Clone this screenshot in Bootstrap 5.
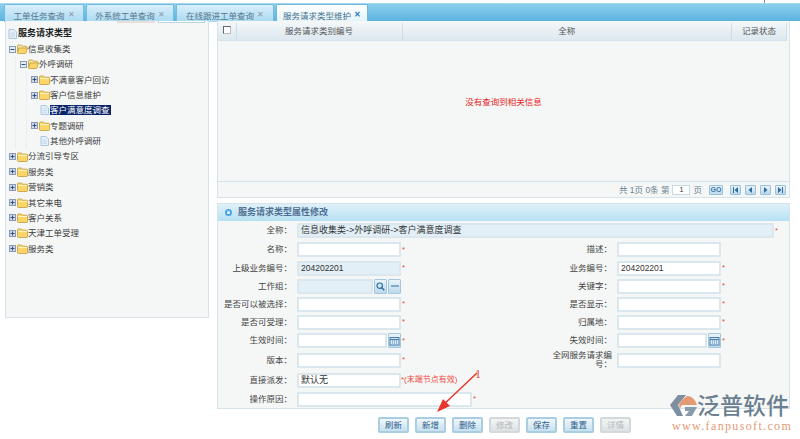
<!DOCTYPE html>
<html lang="zh-CN">
<head>
    <meta charset="UTF-8">
    <meta name="viewport" content="width=device-width, initial-scale=1.0">
    <link href="https://cdn.jsdelivr.net/npm/bootstrap@5.3.0/dist/css/bootstrap.min.css" rel="stylesheet">
    <title>服务请求类型维护</title>
    <style>
        html, body {
            height: 439px;
            overflow: hidden;
        }

        body {
            position: relative;
            background: #fff;
            color: #444;
            font-family: "Liberation Sans", "Noto Sans CJK SC", sans-serif;
            font-size: 8.5px;
            line-height: 1.2;
        }

        /* tab strip */
        .tab-strip {
            height: 18px;
            margin-top: 3px;
            padding-left: 4px;
            gap: 2px;
            border: 0;
            border-top: 1px solid #a5d8ee;
            background: linear-gradient(#8ad0ec, #5cb3e0);
        }

        .tab-strip .nav-link {
            height: 18px;
            margin: 0;
            padding: 3px 0 0 0;
            text-align: center;
            color: #57778c;
            font-size: 8.5px;
            line-height: 13px;
            border: 1px solid #74bbdf;
            border-bottom: 0;
            border-radius: 2px 2px 0 0;
            background: linear-gradient(#d9eefa, #a9daf2);
        }

        .tab-strip .nav-link.active {
            color: #45708c;
            border-color: #6db6dc;
            background: linear-gradient(#fff, #e4f3fa);
        }

        .tab-close {
            margin-left: 3px;
            color: #8a9aa6;
            font-size: 8px;
            vertical-align: 2px;
        }

        .active .tab-close {
            color: #2a7cc0;
            font-weight: 700;
        }

        /* main layout */
        .tree-panel {
            width: 204px;
            height: 297px;
            margin: 0 8px 0 5px;
            background: #f4f7f6;
            border: 1px solid #d5e3ec;
            border-top: 0;
            flex: none;
        }

        .right-col {
            width: 573px;
            flex: none;
        }

        .tree-stubs {
            height: 5px;
            padding-left: 111px;
            gap: 3px;
        }

        .tree-stub {
            width: 38px;
            height: 2px;
            background: #eadfd8;
        }

        .tree-stub + .tree-stub {
            width: 47px;
            background: #fff;
            border: 1px solid #bcd3e2;
            border-top: 0;
        }

        .tree-list, .tree-list ul {
            margin: 0;
            padding: 0;
            list-style: none;
        }

        .tree-list ul {
            margin-left: 6px;
            padding-left: 4px;
            border-left: 1px dotted #e2e6e6;
        }

        .tree-list {
            padding-left: 3px;
        }

        .tree-row {
            display: flex;
            align-items: center;
            height: 15.36px;
            white-space: nowrap;
            color: #3c3c3c;
            font-size: 8.5px;
        }

        .tree-root {
            margin-left: -2px;
            font-weight: 700;
            font-size: 9px;
            color: #222;
        }

        .tree-row svg {
            flex: none;
        }

        .tree-row .tree-sign {
            width: 7px;
            height: 7px;
            margin-right: 1px;
        }

        .tree-row .tree-icon {
            width: 11px;
            height: 10px;
        }

        .tree-leaf-pad {
            width: 8px;
            flex: none;
        }

        .tree-picked {
            background: #0a246a;
            color: #fff;
            padding: 0 1px 0 0;
            line-height: 10px;
        }

        /* result grid */
        .grid-box {
            height: 177px;
            background: #f4f7f6;
            border: 1px solid #d5e3ec;
            border-top: 0;
            padding-top: 2px;
        }

        .grid-head {
            height: 17px;
            margin: 0 2px 0 0;
            table-layout: fixed;
            width: calc(100% - 2px);
        }

        .grid-head th {
            padding: 0;
            height: 17px;
            font-weight: 400;
            font-size: 8.5px;
            text-align: center;
            vertical-align: middle;
            color: #555;
            background: linear-gradient(#f1f6f9, #dce8ef);
            border: 0;
            border-right: 1px solid #cfdde6;
            border-bottom: 1px solid #d5e3ec;
        }

        .check-box {
            display: inline-block;
            width: 8px;
            height: 8px;
            background: #fff;
            border: 1px solid #666;
            border-right-color: #bbb;
            border-bottom-color: #bbb;
        }

        .grid-empty {
            height: 140px;
            padding-bottom: 16px;
            color: #e81c1c;
            font-size: 8.5px;
        }

        .pager {
            height: 18px;
            padding-right: 3px;
            gap: 3px;
            color: #6f8394;
            border-top: 1px solid #d5e3ec;
            font-size: 8.5px;
        }

        .pager-input {
            width: 18px;
            height: 10px;
            background: #fff;
            border: 1px solid #c6d9e5;
            text-align: center;
            line-height: 8px;
            color: #444;
            font-size: 8px;
        }

        .pager-btn {
            display: inline-flex;
            align-items: center;
            justify-content: center;
            width: 11px;
            height: 10px;
            margin-left: 1px;
            background: linear-gradient(#e8f3fa, #bcd9ec);
            border: 1px solid #9cc2da;
            border-radius: 1px;
        }

        .pager-go {
            width: 14px;
            margin: 0 3px 0 4px;
            color: #3b78a8;
            font-size: 7px;
            font-weight: 700;
        }

        /* edit form */
        .form-box {
            height: 206px;
            margin-top: 5px;
            background: #f4f7f6;
            border: 1px solid #d5e3ec;
        }

        .form-title {
            height: 17px;
            padding-left: 7px;
            gap: 6px;
            color: #4f6f92;
            font-weight: 700;
            font-size: 9px;
            background: linear-gradient(#dff1f9, #b6e0f2);
        }

        .title-dot {
            width: 7px;
            height: 7px;
            border: 2px solid #49a5e3;
            border-radius: 50%;
            background: #fff;
        }

        .form-grid {
            display: grid;
            grid-template-columns: 79px 104px 4px 212px 104px 1fr;
            grid-template-rows: 19px 19px 18px 18px 18px 18px 19px 20px 20px 18px;
            align-items: center;
        }

        .field-label {
            padding-right: 5px;
            text-align: right;
            color: #444;
            line-height: 9px;
            white-space: nowrap;
        }

        .field-label-wrap {
            padding-left: 147px;
            white-space: normal;
        }

        .field-input {
            display: block;
            width: 104px;
            height: 15px;
            padding: 0 2px;
            color: #333;
            font-size: 8.5px;
            line-height: 11px;
            background: #fff;
            border: 2px solid #dbe7ee;
            border-radius: 1px;
        }

        .field-input.is-locked {
            background: #e2eff6;
        }

        .field-big-text {
            font-size: 9px;
        }

        .field-span {
            display: flex;
            align-items: center;
            grid-column: span 5;
        }

        .field-span .field-input {
            flex: none;
        }

        .field-span .field-wide {
            width: 477px;
        }

        .field-span .field-long {
            width: 175px;
        }

        .field-star {
            color: #f0483e;
            font-size: 8px;
            padding-left: 1px;
            white-space: nowrap;
        }

        .field-join {
            display: flex;
            width: 104px;
            gap: 1px;
        }

        .field-join .field-input {
            width: auto;
            flex: 1;
            min-width: 0;
        }

        .side-btn {
            display: flex;
            align-items: center;
            justify-content: center;
            width: 13px;
            height: 15px;
            background: linear-gradient(#e8f3fa, #bcd9ec);
            border: 1px solid #a4c7dd;
            border-radius: 1px;
        }

        .action-bar {
            height: 29px;
            padding: 8px 0 0 161px;
            gap: 6px;
        }

        .action-bar .btn {
            width: 31px;
            height: 16px;
            padding: 0;
            color: #2e5f8a;
            font-size: 8.5px;
            line-height: 12px;
            background: linear-gradient(#f0f7fb, #c7e0ef);
            border: 2px solid #a9cde1;
            border-radius: 2px;
        }

        .action-bar .btn:disabled {
            opacity: 1;
            color: #b5b9bc;
            background: linear-gradient(#f3f5f5, #dde2e4);
            border-color: #d3d8da;
        }

        /* things lying over the page */
        .note-arrow {
            position: absolute;
            left: 430px;
            top: 372px;
            width: 60px;
            height: 48px;
        }

        .note-num {
            position: absolute;
            left: 475px;
            top: 367px;
            color: #e8453c;
            font-family: "Liberation Serif", serif;
            font-size: 12px;
        }

        .brand-mark {
            position: absolute;
            left: 668px;
            top: 394px;
            width: 130px;
        }

        .brand-name {
            position: absolute;
            left: 29px;
            top: -2px;
            color: #6c7f90;
            font-size: 23px;
            font-weight: 500;
            line-height: 28px;
            white-space: nowrap;
        }

        .brand-url {
            position: absolute;
            left: 4px;
            top: 26px;
            color: #e39a73;
            font-family: "Liberation Serif", serif;
            font-size: 12px;
            letter-spacing: 1.35px;
            line-height: 12px;
            white-space: nowrap;
        }

        .top-tick {
            position: absolute;
            left: 764px;
            top: 0;
            width: 1px;
            height: 3px;
            background: #888;
        }
    </style>
</head>

<body>
    <svg width="0" height="0" class="position-absolute">
        <symbol id="folder" viewBox="0 0 11 10">
            <path d="M.5 8.500V2q0-1 1-1h3l1 1.200h4q1 0 1 1v5.300q0 1-1 1h-8q-1 0-1-1z" fill="#fbd568" stroke="#c09a3a" stroke-width=".8"/>
            <path d="M1.200 3.500h8.600" stroke="#fff3c4" stroke-width="1"/>
        </symbol>
        <symbol id="folder-open" viewBox="0 0 11 10">
            <path d="M.5 8.500V2q0-1 1-1h3l1 1.200h3.500q1 0 1 1V4" fill="#f6e3a6" stroke="#c09a3a" stroke-width=".8"/>
            <path d="M.5 8.800 2 4h8.500l-1.500 4.800q-.2.700-1 .700H1.300q-1 0-.8-.7z" fill="#fbd568" stroke="#c09a3a" stroke-width=".8"/>
        </symbol>
        <symbol id="file" viewBox="0 0 11 10">
            <path d="M2 .5h5l2.500 2.500v6.500H2z" fill="#e4f0fb" stroke="#9dbbd6" stroke-width=".8"/>
            <path d="M3.500 4h4.500M3.500 5.700h4.500M3.500 7.400h4.500" stroke="#b4cde3" stroke-width=".6"/>
        </symbol>
        <symbol id="plus" viewBox="0 0 7 7">
            <rect x=".5" y=".5" width="6" height="6" fill="#ced9e8" stroke="#8b9bb5"/>
            <path d="M1.500 3.500h4M3.500 1.500v4" stroke="#334f80"/>
        </symbol>
        <symbol id="minus" viewBox="0 0 7 7">
            <rect x=".5" y=".5" width="6" height="6" fill="#e6ecf3" stroke="#8b9bb5"/>
            <path d="M1.500 3.500h4" stroke="#334f80"/>
        </symbol>
        <symbol id="cal" viewBox="0 0 11 10">
            <rect x="1" y="1.500" width="9" height="7.500" fill="#dcecf7" stroke="#4d7fae"/>
            <path d="M1 3.500h9" stroke="#4d7fae" stroke-width="1.200"/>
            <path d="M3 5h1M5 5h1M7 5h1M3 7h1M5 7h1M7 7h1" stroke="#4d7fae"/>
        </symbol>
    </svg>

    <div class="top-tick"></div>

    <ul class="nav nav-tabs tab-strip">
        <li class="nav-item"><a class="nav-link" href="#" style="width: 80px">工单任务查询<span class="tab-close">✕</span></a></li>
        <li class="nav-item"><a class="nav-link" href="#" style="width: 88px">外系统工单查询<span class="tab-close">✕</span></a></li>
        <li class="nav-item"><a class="nav-link" href="#" style="width: 98px">在线跟进工单查询<span class="tab-close">✕</span></a></li>
        <li class="nav-item"><a class="nav-link active" href="#" style="width: 92px">服务请求类型维护<span class="tab-close">✕</span></a></li>
    </ul>

    <div class="d-flex">
        <div class="tree-panel">
            <div class="tree-stubs d-flex"><span class="tree-stub"></span><span class="tree-stub"></span></div>
            <ul class="tree-list">
                <li class="tree-row tree-root"><svg class="tree-icon"><use href="#file"/></svg>服务请求类型</li>
                <li>
                    <div class="tree-row"><svg class="tree-sign"><use href="#minus"/></svg><svg class="tree-icon"><use href="#folder-open"/></svg>信息收集类</div>
                    <ul>
                        <li>
                            <div class="tree-row"><svg class="tree-sign"><use href="#minus"/></svg><svg class="tree-icon"><use href="#folder-open"/></svg>外呼调研</div>
                            <ul>
                                <li class="tree-row"><svg class="tree-sign"><use href="#plus"/></svg><svg class="tree-icon"><use href="#folder"/></svg>不满意客户回访</li>
                                <li class="tree-row"><svg class="tree-sign"><use href="#plus"/></svg><svg class="tree-icon"><use href="#folder"/></svg>客户信息维护</li>
                                <li class="tree-row"><span class="tree-leaf-pad"></span><svg class="tree-icon"><use href="#file"/></svg><span class="tree-picked">客户满意度调查</span></li>
                                <li class="tree-row"><svg class="tree-sign"><use href="#plus"/></svg><svg class="tree-icon"><use href="#folder"/></svg>专题调研</li>
                                <li class="tree-row"><span class="tree-leaf-pad"></span><svg class="tree-icon"><use href="#file"/></svg>其他外呼调研</li>
                            </ul>
                        </li>
                    </ul>
                </li>
                <li class="tree-row"><svg class="tree-sign"><use href="#plus"/></svg><svg class="tree-icon"><use href="#folder"/></svg>分流引导专区</li>
                <li class="tree-row"><svg class="tree-sign"><use href="#plus"/></svg><svg class="tree-icon"><use href="#folder"/></svg>服务类</li>
                <li class="tree-row"><svg class="tree-sign"><use href="#plus"/></svg><svg class="tree-icon"><use href="#folder"/></svg>营销类</li>
                <li class="tree-row"><svg class="tree-sign"><use href="#plus"/></svg><svg class="tree-icon"><use href="#folder"/></svg>其它来电</li>
                <li class="tree-row"><svg class="tree-sign"><use href="#plus"/></svg><svg class="tree-icon"><use href="#folder"/></svg>客户关系</li>
                <li class="tree-row"><svg class="tree-sign"><use href="#plus"/></svg><svg class="tree-icon"><use href="#folder"/></svg>天津工单受理</li>
                <li class="tree-row"><svg class="tree-sign"><use href="#plus"/></svg><svg class="tree-icon"><use href="#folder"/></svg>服务类</li>
            </ul>
        </div>

        <div class="right-col">
            <div class="grid-box">
                <table class="grid-head">
                    <colgroup><col style="width: 18px"><col style="width: 166px"><col><col style="width: 55px"></colgroup>
                    <tr>
                        <th><span class="check-box"></span></th>
                        <th>服务请求类别编号</th>
                        <th>全称</th>
                        <th>记录状态</th>
                    </tr>
                </table>
                <div class="grid-empty d-flex align-items-center justify-content-center">没有查询到相关信息</div>
                <div class="pager d-flex align-items-center justify-content-end">
                    <span>共 1页 0条 第</span>
                    <span class="pager-input">1</span>
                    <span>页</span>
                    <span class="pager-btn pager-go">GO</span>
                    <span class="pager-btn"><svg width="7" height="6" viewBox="0 0 7 6"><path d="M1 0v6h1V0zM6 0 2.500 3 6 6z" fill="#2f6d9e"/></svg></span>
                    <span class="pager-btn"><svg width="7" height="6" viewBox="0 0 7 6"><path d="M5 0 1.500 3 5 6z" fill="#2f6d9e"/></svg></span>
                    <span class="pager-btn"><svg width="7" height="6" viewBox="0 0 7 6"><path d="M2 0l3.500 3L2 6z" fill="#2f6d9e"/></svg></span>
                    <span class="pager-btn"><svg width="7" height="6" viewBox="0 0 7 6"><path d="M1 0l3.500 3L1 6zM5 0v6h1V0z" fill="#2f6d9e"/></svg></span>
                </div>
            </div>

            <div class="form-box">
                <div class="form-title d-flex align-items-center"><span class="title-dot"></span>服务请求类型属性修改</div>
                <div class="form-grid">
                    <div class="field-label">全称：</div>
                    <div class="field-span">
                        <div class="field-input field-wide field-big-text is-locked">信息收集类-&gt;外呼调研-&gt;客户满意度调查</div>
                        <div class="field-star">*</div>
                    </div>

                    <div class="field-label">名称：</div>
                    <div class="field-input"></div>
                    <div class="field-star">*</div>
                    <div class="field-label">描述：</div>
                    <div class="field-input"></div>
                    <div></div>

                    <div class="field-label">上级业务编号：</div>
                    <div class="field-input is-locked">204202201</div>
                    <div class="field-star">*</div>
                    <div class="field-label">业务编号：</div>
                    <div class="field-input">204202201</div>
                    <div class="field-star">*</div>

                    <div class="field-label">工作组：</div>
                    <div class="field-join">
                        <div class="field-input is-locked"></div>
                        <span class="side-btn"><svg width="9" height="9" viewBox="0 0 9 9"><circle cx="3.700" cy="3.700" r="2.700" fill="none" stroke="#2f6d9e" stroke-width="1.200"/><path d="M5.700 5.700 8.300 8.300" stroke="#2f6d9e" stroke-width="1.500"/></svg></span>
                        <span class="side-btn"><svg width="8" height="2" viewBox="0 0 8 2"><path d="M0 1h8" stroke="#2f6d9e"/></svg></span>
                    </div>
                    <div></div>
                    <div class="field-label">关键字：</div>
                    <div class="field-input"></div>
                    <div class="field-star">*</div>

                    <div class="field-label">是否可以被选择：</div>
                    <div class="field-input"></div>
                    <div class="field-star">*</div>
                    <div class="field-label">是否显示：</div>
                    <div class="field-input"></div>
                    <div class="field-star">*</div>

                    <div class="field-label">是否可受理：</div>
                    <div class="field-input"></div>
                    <div class="field-star">*</div>
                    <div class="field-label">归属地：</div>
                    <div class="field-input"></div>
                    <div class="field-star">*</div>

                    <div class="field-label">生效时间：</div>
                    <div class="field-join">
                        <div class="field-input"></div>
                        <span class="side-btn"><svg width="11" height="10"><use href="#cal"/></svg></span>
                    </div>
                    <div class="field-star">*</div>
                    <div class="field-label">失效时间：</div>
                    <div class="field-join">
                        <div class="field-input"></div>
                        <span class="side-btn"><svg width="11" height="10"><use href="#cal"/></svg></span>
                    </div>
                    <div class="field-star">*</div>

                    <div class="field-label">版本：</div>
                    <div class="field-input"></div>
                    <div class="field-star">*</div>
                    <div class="field-label field-label-wrap">全网服务请求编号：</div>
                    <div class="field-input"></div>
                    <div></div>

                    <div class="field-label">直接派发：</div>
                    <div class="field-span">
                        <div class="field-input field-big-text">默认无</div>
                        <div class="field-star ps-0">*(末端节点有效)</div>
                    </div>

                    <div class="field-label">操作原因：</div>
                    <div class="field-span">
                        <div class="field-input field-long"></div>
                        <div class="field-star">*</div>
                    </div>
                </div>
            </div>

            <div class="action-bar d-flex">
                <button type="button" class="btn">刷新</button>
                <button type="button" class="btn">新增</button>
                <button type="button" class="btn">删除</button>
                <button type="button" class="btn" disabled>修改</button>
                <button type="button" class="btn">保存</button>
                <button type="button" class="btn">重置</button>
                <button type="button" class="btn" disabled>详情</button>
            </div>
        </div>
    </div>

    <svg class="note-arrow" viewBox="0 0 60 48">
        <path d="M47 1 12 34" stroke="#e8352e" stroke-width="1.500" fill="none"/>
        <path d="M7 40 20 34 13 27z" fill="#e8352e"/>
    </svg>
    <span class="note-num">1</span>

    <div class="brand-mark">
        <svg width="28" height="21" viewBox="0 0 28 21" class="position-absolute" style="left: 2px; top: 1px">
            <path d="M8 0h8L8 10l5 11H7L0 10z" fill="#7d8fa0"/>
            <path d="M17 1q7 0 10 9H12q-2 2-2 5l-1-5q2-5 8-9z" fill="#e39a73"/>
            <path d="M15 12h12l-5 9h-7l4-5h-4z" fill="#8a9bab"/>
        </svg>
        <span class="brand-name">泛普软件</span>
        <span class="brand-url">www.fanpusoft.com</span>
    </div>

    <script src="https://cdn.jsdelivr.net/npm/bootstrap@5.3.0/dist/js/bootstrap.bundle.min.js"></script>
</body>
</html>
